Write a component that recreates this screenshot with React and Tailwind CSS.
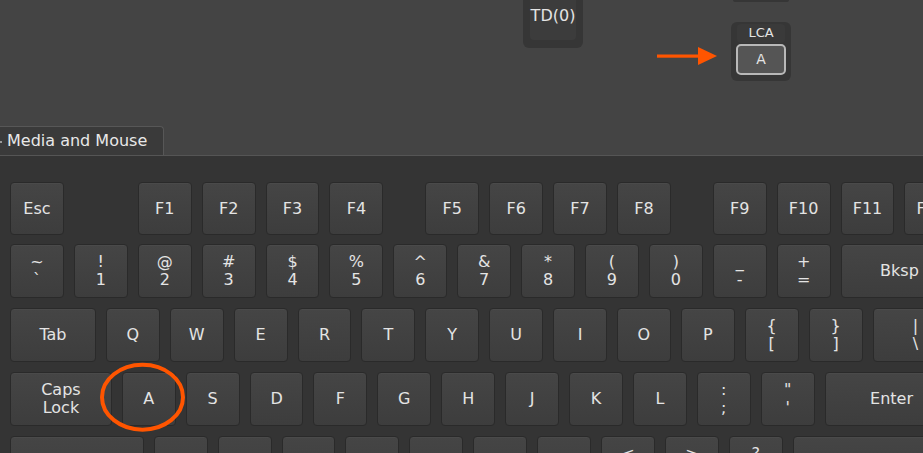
import React from "react";

const U = {
  1: "w-[53.9px]",
  1.5: "w-[85.85px]",
  1.75: "w-[101.825px]",
  2: "w-[117.8px]",
  2.25: "w-[133.775px]",
  2.75: "w-[165.725px]",
};

const SP = {
  1: "w-[63.9px]",
  0.5: "w-[31.95px]",
};

function Key({ label, u = 1, h = "h-[54px]" }) {
  return (
    <div
      className={`${U[u]} ${h} shrink-0 rounded-[4px] border border-[#2a2a2a] bg-gradient-to-b from-[#454545] to-[#3d3d3d] shadow-[inset_0_1px_0_#4a4a4a] flex items-center justify-center text-center whitespace-pre-line text-[16px] leading-[18px] text-[#e4e4e4]`}
    >
      {label}
    </div>
  );
}

function Row({ items, h }) {
  return (
    <div className="flex gap-[10px] pl-[10px]">
      {items.map((it, i) =>
        it.sp ? (
          <div key={i} className={`${SP[it.sp]} -ml-[10px] shrink-0`} />
        ) : (
          <Key key={i} label={it.l} u={it.u || 1} h={h} />
        )
      )}
    </div>
  );
}

const k = (l, u) => ({ l, u });

const row0 = [
  k("Esc"),
  { sp: 1 },
  k("F1"), k("F2"), k("F3"), k("F4"),
  { sp: 0.5 },
  k("F5"), k("F6"), k("F7"), k("F8"),
  { sp: 0.5 },
  k("F9"), k("F10"), k("F11"), k("F12"),
];
const row1 = [
  k("~\n`"), k("!\n1"), k("@\n2"), k("#\n3"), k("$\n4"), k("%\n5"), k("^\n6"),
  k("&\n7"), k("*\n8"), k("(\n9"), k(")\n0"), k("_\n-"), k("+\n="), k("Bksp", 2),
];
const row2 = [
  k("Tab", 1.5), k("Q"), k("W"), k("E"), k("R"), k("T"), k("Y"), k("U"), k("I"),
  k("O"), k("P"), k("{\n["), k("}\n]"), k("|\n\\", 1.5),
];
const row3 = [
  k("Caps\nLock", 1.75), k("A"), k("S"), k("D"), k("F"), k("G"), k("H"), k("J"),
  k("K"), k("L"), k(":\n;"), k("\"\n'"), k("Enter", 2.25),
];
const row4 = [
  k("Shift", 2.25), k("Z"), k("X"), k("C"), k("V"), k("B"), k("N"), k("M"),
  k("<\n,"), k(">\n."), k("?\n/"), k("Shift", 2.75),
];

export default function App() {
  return (
    <div className="relative w-[923px] h-[453px] overflow-hidden bg-[#444444] font-['DejaVu_Sans',sans-serif] text-[#e4e4e4] flex flex-col">
      {/* top keymap canvas */}
      <div className="h-[126px] shrink-0 flex items-start pl-[523px]">
        <div className="w-[60px] h-[48px] rounded-b-[6px] bg-[#363636] px-[7px] pb-[8px] flex">
          <div className="flex-1 rounded-b-[4px] bg-[#3c3c3c] flex justify-center pt-[7px] text-[16px] leading-[18px]">
            TD(0)
          </div>
        </div>
        <div className="ml-[148px] flex flex-col items-center w-[60px]">
          <div className="w-[56px] h-[2px] rounded-b-[2px] bg-[#363636]" />
          <div className="mt-[20px] w-[60px] h-[59px] rounded-[6px] bg-[#363636] flex flex-col items-center pt-[2px]">
            <div className="w-[48px] h-[19px] rounded-[4px] bg-[#3a3a3a] flex justify-center pt-[1px] text-[13px] leading-[15px]">
              LCA
            </div>
            <div className="mt-[1px] w-[50px] h-[31px] rounded-[5px] border-2 border-[#b8b8b8] bg-[#555555] flex items-center justify-center text-[14px]">
              A
            </div>
          </div>
        </div>
      </div>

      {/* tab bar */}
      <div className="h-[29px] shrink-0 flex items-end relative">
        <div className="w-[164px] h-[29px] bg-[#3a3a3a] border-t border-r border-[#575757] rounded-tr-[4px] flex items-center pl-[7px] text-[16px] text-[#e8e8e8]">
          Media and Mouse
        </div>
        <div className="absolute left-0 top-[15px] w-[2px] h-[2px] bg-[#9a9a9a]" />
      </div>

      {/* keyboard panel */}
      <div className="flex-1 bg-[#343434] border-t border-[#555555] pt-[26px] flex flex-col">
        <Row items={row0} h="h-[53px]" />
        <div className="mt-[9px] flex flex-col gap-[10px]">
          <Row items={row1} />
          <Row items={row2} />
          <Row items={row3} />
          <Row items={row4} />
        </div>
      </div>

      {/* annotations */}
      <svg
        className="absolute left-0 top-0 pointer-events-none"
        width="923"
        height="453"
        viewBox="0 0 923 453"
      >
        <rect x="657" y="54.5" width="43" height="3.2" fill="#ff5500" />
        <polygon points="698,47 717,56 698,65" fill="#ff5500" />
        <ellipse cx="142.5" cy="397.2" rx="40.5" ry="32.5" fill="none" stroke="#ff5500" strokeWidth="4" />
      </svg>
    </div>
  );
}
